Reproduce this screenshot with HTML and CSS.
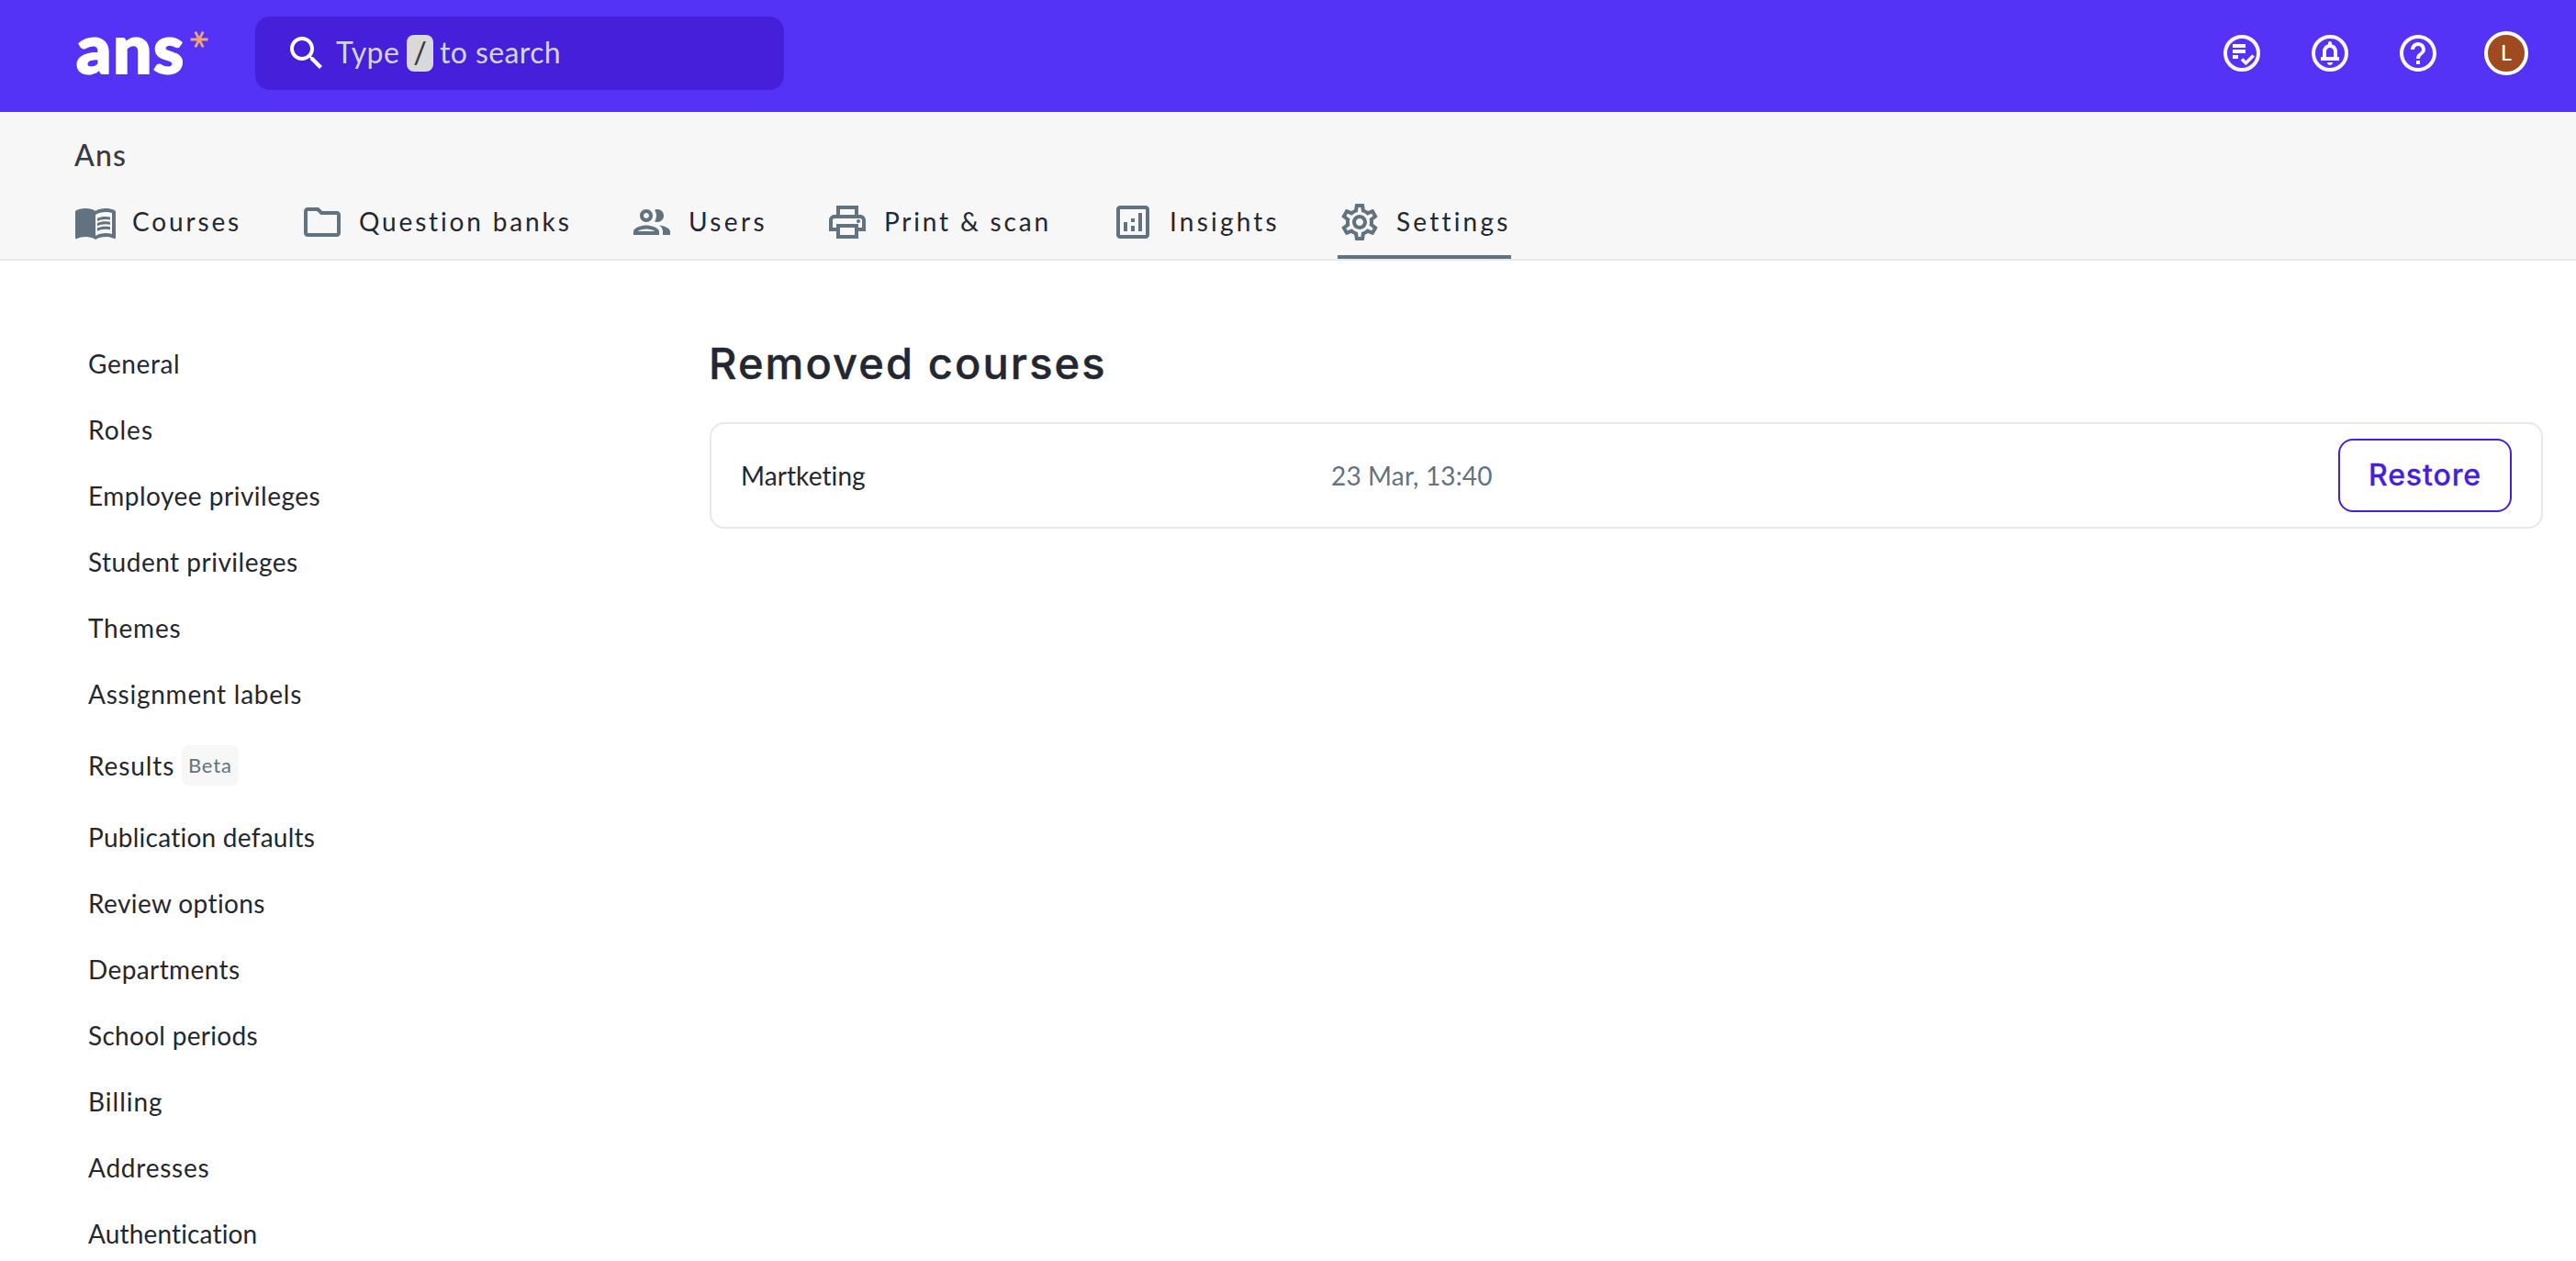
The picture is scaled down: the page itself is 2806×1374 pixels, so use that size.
FILE: index.html
```
<!DOCTYPE html>
<html lang="en">
<head>
<meta charset="utf-8">
<title>Removed courses - Ans</title>
<link rel="stylesheet" href="styles.css">
</head>
<body>
<header class="topbar">
  <a class="logo" href="#">
    <span class="logo-word">ans</span>
    <svg class="logo-star" viewBox="0 0 20 20"><path d="M.5 10h19M5.800 1.600l8.400 16.800M14.200 1.600l-8.400 16.800"/></svg>
  </a>
  <div class="search">
    <svg class="icon" viewBox="0 0 24 24"><path d="M15.500 14h-.79l-.28-.27C15.410 12.590 16 11.110 16 9.500 16 5.910 13.090 3 9.500 3S3 5.910 3 9.500 5.910 16 9.500 16c1.610 0 3.090-.59 4.230-1.570l.27.28v.79l5 4.990L20.490 19l-4.990-5zm-6 0C7.010 14 5 11.990 5 9.500S7.010 5 9.500 5 14 7.010 14 9.500 11.990 14 9.500 14z"/></svg>
    <span class="search-type">Type</span>
    <kbd class="key">/</kbd>
    <span class="search-rest">to search</span>
  </div>
  <nav class="actions">
    <svg class="icon" viewBox="0 0 24 24"><circle class="ring" cx="12" cy="12" r="9"/><path d="M7 7h7v2H7zM7 10h7v2H7zM7 13h3v2H7z"/><path class="tick" d="M12 15.200l2.200 2.200 4.100-4.200"/></svg>
    <svg class="icon" viewBox="0 0 24 24"><circle class="ring" cx="12" cy="12" r="9"/><path d="M16 14v-3c0-1.860-1.280-3.410-3-3.860V6.500c0-.55-.45-1-1-1s-1 .45-1 1v.64c-1.720.45-3 2-3 3.860v3H7v2h10v-2h-1zm-2 0h-4v-3c0-1.100.9-2 2-2s2 .9 2 2v3zM12 18.500c.83 0 1.500-.67 1.500-1.500h-3c0 .83.67 1.500 1.500 1.500z"/></svg>
    <svg class="icon" viewBox="0 0 24 24"><path d="M11 18h2v-2h-2v2zm1-16C6.480 2 2 6.480 2 12s4.480 10 10 10 10-4.480 10-10S17.520 2 12 2zm0 18c-4.410 0-8-3.590-8-8s3.590-8 8-8 8 3.590 8 8-3.590 8-8 8zm0-14c-2.210 0-4 1.790-4 4h2c0-1.100.9-2 2-2s2 .9 2 2c0 2-3 1.750-3 5h2c0-2.250 3-2.500 3-5 0-2.210-1.790-4-4-4z"/></svg>
    <span class="avatar">L</span>
  </nav>
</header>

<section class="subheader">
  <div class="school">Ans</div>
  <nav class="tabs">
    <a class="tab courses"><svg class="icon" viewBox="0 0 24 24"><path d="M21 5c-1.110-.35-2.330-.5-3.500-.5-1.950 0-4.050.4-5.500 1.500-1.450-1.100-3.550-1.500-5.500-1.500S2.450 4.900 1 6v14.650c0 .25.25.5.5.5.1 0 .15-.05.25-.05C3.100 20.450 5.050 20 6.500 20c1.950 0 4.050.4 5.500 1.500 1.350-.85 3.800-1.500 5.500-1.500 1.650 0 3.350.3 4.750 1.050.1.05.15.05.25.05.25 0 .5-.25.5-.5V6c-.6-.45-1.250-.75-2-1zm0 13.500c-1.100-.35-2.300-.5-3.500-.5-1.700 0-4.150.65-5.500 1.500V8c1.350-.85 3.800-1.500 5.500-1.500 1.200 0 2.400.15 3.500.5v11.500z"/><path d="M17.500 10.500c.88 0 1.730.09 2.500.26V9.240c-.79-.15-1.640-.24-2.500-.24-1.700 0-3.240.29-4.500.83v1.660c1.130-.64 2.700-.99 4.500-.99zM13 12.490v1.660c1.130-.64 2.700-.99 4.500-.99.88 0 1.730.09 2.500.26V11.900c-.79-.15-1.640-.24-2.500-.24-1.700 0-3.240.3-4.500.83zM17.500 14.330c-1.700 0-3.240.29-4.500.83v1.660c1.130-.64 2.700-.99 4.500-.99.88 0 1.730.09 2.500.26v-1.520c-.79-.16-1.640-.24-2.500-.24z"/></svg><span>Courses</span></a>
    <a class="tab banks"><svg class="icon" viewBox="0 0 24 24"><path d="M9.170 6l2 2H20v10H4V6h5.170M10 4H4c-1.100 0-1.990.9-1.990 2L2 18c0 1.100.9 2 2 2h16c1.100 0 2-.9 2-2V8c0-1.100-.9-2-2-2h-8l-2-2z"/></svg><span>Question banks</span></a>
    <a class="tab users"><svg class="icon" viewBox="0 0 24 24"><path d="M9 13.750c-2.340 0-7 1.170-7 3.500V19h14v-1.750c0-2.330-4.660-3.500-7-3.500zM4.340 17c.84-.58 2.870-1.250 4.660-1.250s3.820.67 4.660 1.250H4.340zM9 12c1.930 0 3.500-1.570 3.500-3.500S10.930 5 9 5 5.500 6.570 5.500 8.500 7.070 12 9 12zm0-5c.83 0 1.500.67 1.500 1.500S9.830 10 9 10s-1.500-.67-1.500-1.500S8.170 7 9 7zm7.040 6.810c1.160.84 1.960 1.960 1.960 3.440V19h4v-1.750c0-2.020-3.500-3.170-5.960-3.440zM15 12c1.930 0 3.500-1.570 3.500-3.500S16.930 5 15 5c-.54 0-1.040.13-1.500.35.63.89 1 1.980 1 3.150s-.37 2.260-1 3.150c.46.22.96.35 1.500.35z"/></svg><span>Users</span></a>
    <a class="tab print"><svg class="icon" viewBox="0 0 24 24"><path d="M19 8h-1V3H6v5H5c-1.660 0-3 1.340-3 3v6h4v4h12v-4h4v-6c0-1.660-1.340-3-3-3zM8 5h8v3H8V5zm8 14H8v-4h8v4zm2-4v-2H6v2H4v-4c0-.55.45-1 1-1h14c.55 0 1 .45 1 1v4h-2z"/><circle cx="18" cy="11.500" r="1"/></svg><span>Print &amp; scan</span></a>
    <a class="tab insights"><svg class="icon" viewBox="0 0 24 24"><path d="M19 3H5c-1.100 0-2 .9-2 2v14c0 1.100.9 2 2 2h14c1.100 0 2-.9 2-2V5c0-1.100-.9-2-2-2zm0 16H5V5h14v14zM7 12h2v5H7zM15 7h2v10h-2zM11 14h2v3h-2zM11 10h2v2h-2z"/></svg><span>Insights</span></a>
    <a class="tab settings"><svg class="icon" viewBox="0 0 24 24"><path d="M19.430 12.980c.04-.32.07-.64.07-.98 0-.34-.03-.66-.07-.98l2.110-1.650c.19-.15.24-.42.12-.64l-2-3.460c-.09-.16-.26-.25-.44-.25-.06 0-.12.010-.17.030l-2.490 1c-.52-.4-1.080-.73-1.690-.98l-.38-2.650C14.460 2.180 14.250 2 14 2h-4c-.25 0-.46.18-.49.42l-.38 2.650c-.61.25-1.170.59-1.690.98l-2.490-1c-.06-.02-.12-.03-.18-.03-.17 0-.34.09-.43.25l-2 3.460c-.13.22-.07.49.12.64l2.110 1.650c-.04.32-.07.65-.07.98 0 .33.03.66.07.98l-2.110 1.650c-.19.15-.24.42-.12.64l2 3.460c.09.16.26.25.44.25.06 0 .12-.01.17-.03l2.490-1c.52.4 1.080.73 1.690.98l.38 2.650c.03.24.24.42.49.42h4c.25 0 .46-.18.49-.42l.38-2.650c.61-.25 1.170-.59 1.690-.98l2.490 1c.06.02.12.03.18.03.17 0 .34-.09.43-.25l2-3.460c.12-.22.07-.49-.12-.64l-2.110-1.650zm-1.980-1.710c.04.31.05.52.05.73 0 .21-.02.43-.05.73l-.14 1.130.89.7 1.080.84-.7 1.210-1.270-.51-1.040-.42-.9.68c-.43.32-.84.56-1.250.73l-1.060.43-.16 1.130-.2 1.350h-1.400l-.19-1.350-.16-1.130-1.060-.43c-.43-.18-.83-.41-1.230-.71l-.91-.7-1.060.43-1.270.51-.7-1.210 1.080-.84.89-.7-.14-1.130c-.03-.31-.05-.54-.05-.74s.02-.43.05-.73l.14-1.130-.89-.7-1.080-.84.7-1.210 1.270.51 1.040.42.9-.68c.43-.32.84-.56 1.250-.73l1.060-.43.16-1.130.2-1.350h1.390l.19 1.350.16 1.130 1.060.43c.43.18.83.41 1.230.71l.91.7 1.060-.43 1.270-.51.7 1.210-1.070.85-.89.7.14 1.130zM12 8c-2.210 0-4 1.790-4 4s1.790 4 4 4 4-1.790 4-4-1.790-4-4-4zm0 6c-1.100 0-2-.9-2-2s.9-2 2-2 2 .9 2 2-.9 2-2 2z"/></svg><span>Settings</span></a>
  </nav>
</section>

<div class="page">
  <ul class="menu">
    <li>General</li>
    <li>Roles</li>
    <li>Employee privileges</li>
    <li>Student privileges</li>
    <li>Themes</li>
    <li>Assignment labels</li>
    <li class="with-badge"><span>Results</span><span class="badge">Beta</span></li>
    <li>Publication defaults</li>
    <li>Review options</li>
    <li>Departments</li>
    <li>School periods</li>
    <li>Billing</li>
    <li>Addresses</li>
    <li>Authentication</li>
  </ul>
  <main class="content">
    <h1>Removed courses</h1>
    <div class="card">
      <span class="name">Martketing</span>
      <span class="date">23 Mar, 13:40</span>
      <button class="restore">Restore</button>
    </div>
  </main>
</div>
</body>
</html>
```
FILE: styles.css
```
* { box-sizing: border-box; }

body {
  margin: 0;
  height: 1374px;
  overflow: hidden;
  background: #fff;
  color: #24272f;
  font-family: Lato, "Open Sans", sans-serif;
  font-size: 28px;
}

.icon { width: 48px; height: 48px; flex: none; fill: currentColor; }

/* Top bar */
.topbar {
  display: flex;
  align-items: center;
  height: 122px;
  padding: 0 52px 6px 83px;
  background: #5432f6;
  color: #f7f7f7;
}
.logo { display: flex; width: 195px; height: 116px; color: #fff; text-decoration: none; }
.logo-word {
  font-size: 75px;
  font-weight: 900;
  line-height: 102px;
  letter-spacing: 1.6px;
  -webkit-text-stroke: 2px #fff;
}
.logo-star { width: 20px; height: 20px; margin: 33px 0 0 5px; fill: none; stroke: #eda574; stroke-width: 2.8; }
.search {
  display: flex;
  align-items: center;
  width: 576px;
  height: 80px;
  padding-left: 32px;
  border-radius: 16px;
  background: #451fd9;
  color: #d3d5dc;
  font-size: 32px;
  line-height: 40px;
}
.search .icon { color: #fff; }
.search-type { width: 77px; margin-left: 8px; padding-bottom: 3px; letter-spacing: .5px; }
.key {
  width: 29px;
  height: 40px;
  border-radius: 8px;
  background: #d9d9d9;
  color: #343b42;
  font: 500 32px/38px Lato, sans-serif;
  text-align: center;
}
.search-rest { margin-left: 7px; padding-bottom: 3px; letter-spacing: .4px; }
.actions { display: flex; align-items: center; gap: 48px; margin-left: auto; }
.ring { fill: none; stroke: currentColor; stroke-width: 2; }
.tick { fill: none; stroke: currentColor; stroke-width: 1.8; }
.avatar {
  width: 48px;
  height: 48px;
  border: 4px solid #fff;
  border-radius: 50%;
  background: #a04a20;
  color: #fff;
  font-size: 23px;
  font-weight: 500;
  line-height: 39px;
  text-align: center;
}

/* School name and tabs */
.subheader {
  display: flex;
  flex-direction: column;
  justify-content: space-between;
  height: 162px;
  padding: 27px 80px 0;
  border-bottom: 2px solid #e8e8e8;
  background: #f7f7f7;
}
.school { padding-left: 1px; color: #343b42; font-size: 32px; font-weight: 500; line-height: 40px; letter-spacing: 1.2px; }
.tabs { display: flex; }
.tab { display: flex; height: 80px; padding-top: 16px; line-height: 47px; white-space: nowrap; }
.tab .icon { margin-right: 16px; color: #62727f; }
.courses { width: 247px; letter-spacing: 2.85px; }
.banks { width: 359px; letter-spacing: 2.85px; }
.users { width: 213px; letter-spacing: 3.4px; }
.print { width: 311px; letter-spacing: 2.8px; }
.insights { width: 247px; letter-spacing: 3.2px; }
.settings { width: 189px; letter-spacing: 3.2px; border-bottom: 4px solid #62727f; }

/* Page body */
.page { display: flex; padding: 76px 36px 0 96px; }
.menu { width: 677px; margin: 0; padding: 0; list-style: none; }
.menu li { height: 72px; line-height: 72px; letter-spacing: .5px; }
.menu li:nth-child(1) { letter-spacing: .6px; }
.menu li:nth-child(2) { letter-spacing: 1px; }
.menu li:nth-child(5) { letter-spacing: .8px; }
.menu li:nth-child(6) { letter-spacing: .75px; }
.menu li:nth-child(8) { letter-spacing: .25px; }
.menu li:nth-child(9) { letter-spacing: .4px; }
.menu li:nth-child(10) { letter-spacing: .4px; }
.menu li:nth-child(11) { letter-spacing: .3px; }
.menu li:nth-child(12) { letter-spacing: 1px; }
.menu li:nth-child(13) { letter-spacing: .75px; }
.menu li:nth-child(14) { letter-spacing: .15px; }
.menu .with-badge { display: flex; align-items: center; height: 84px; letter-spacing: .9px; }
.with-badge > span:first-child { width: 102px; }
.badge {
  width: 62px;
  height: 44px;
  padding-left: 7px;
  border-radius: 8px;
  background: #f7f7f7;
  color: #62727f;
  font-size: 22px;
  line-height: 43px;
  letter-spacing: .8px;
}
.content { flex: 1; }
h1 {
  margin: 0 0 28px -1px;
  font: 500 47px/72px Inter, sans-serif;
  letter-spacing: 2.1px;
  -webkit-text-stroke: .4px;
}
.card {
  display: flex;
  align-items: center;
  height: 116px;
  padding: 0 32px;
  border: 2px solid #e8e8e8;
  border-radius: 16px;
}
.name { width: 643px; letter-spacing: .1px; }
.date { color: #62727f; letter-spacing: .15px; }
.restore {
  width: 189px;
  height: 80px;
  margin-left: auto;
  padding: 0;
  border: 2px solid #451fd9;
  border-radius: 16px;
  background: #fff;
  color: #451fd9;
  font: 500 32px/76px Inter, sans-serif;
  letter-spacing: .9px;
  -webkit-text-stroke: .3px;
}
```
